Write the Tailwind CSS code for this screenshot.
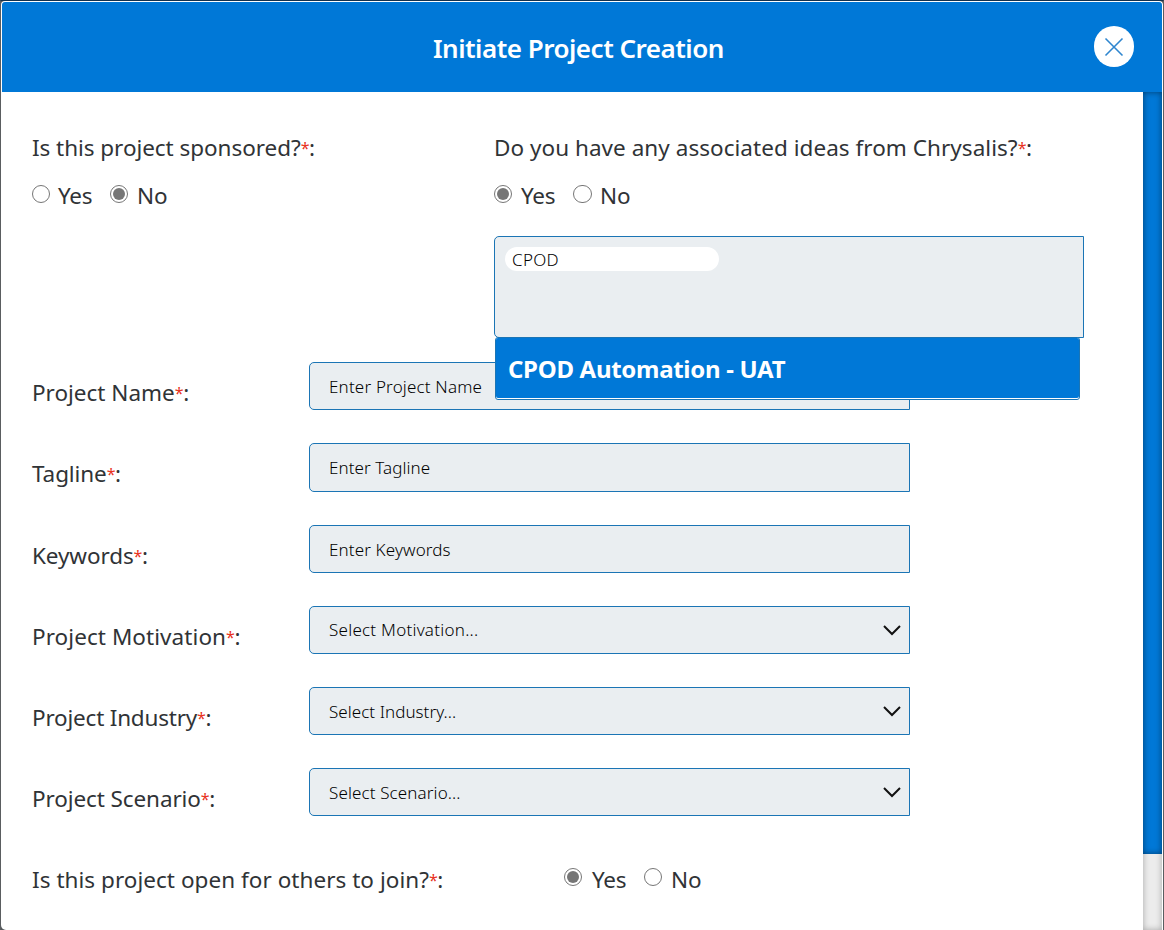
<!DOCTYPE html>
<html lang="en">
<head>
<meta charset="utf-8">
<title>Initiate Project Creation</title>
<script src="https://cdn.jsdelivr.net/npm/@tailwindcss/browser@4"></script>
</head>
<body class="bg-[#55585b] font-['Noto_Sans','Open_Sans',sans-serif] text-[#303336]">
<main class="flex h-[930px] w-[1164px] flex-col overflow-hidden border-t border-r border-l border-t-[#14324f] border-r-[#5a5d60] border-l-[#5a5d60]">
  <header class="flex h-[91px] shrink-0 items-center rounded-t-[4px] border-t border-r border-l border-white bg-[#0078d7]">
    <h1 class="mt-[2px] ml-[431px] w-[292px] text-[26px] leading-[34px] font-semibold tracking-[-0.5px] whitespace-nowrap text-white">Initiate Project Creation</h1>
    <button class="-mt-[2px] ml-[369px] flex h-[41px] w-[40px] items-center justify-center rounded-full bg-white" aria-label="Close">
      <svg class="mt-[1px] h-[20px] w-[20px]" viewBox="0 0 20 20" fill="none" stroke="#2f86cf" stroke-width="1.6"><path d="M1.500 1.500l17 17M18.500 1.500l-17 17"/></svg>
    </button>
  </header>
  <div class="flex h-[838px] rounded-bl-[5px] border-r border-white bg-white">
    <form class="w-[1142px] pt-[39px] pl-[31px]">
      <div class="flex h-[231px]">
        <section class="w-[462px]">
          <p class="h-[33px] text-[22.500px] leading-[33px] whitespace-nowrap"><span class="tracking-[-0.05px]">Is this project sponsored?</span><span class="align-[2px] text-[16px] leading-none tracking-[-0.5px] text-[#e8321c]">*</span>:</p>
          <div class="mt-[15px] flex h-[33px] text-[22.500px] leading-[33px]">
            <label class="flex w-[78px] tracking-[-0.3px]"><span class="mt-[6px] mr-[8px] h-[18px] w-[18px] rounded-full border border-[#767676] bg-white"></span>Yes</label>
            <label class="flex"><span class="mt-[6px] mr-[9px] flex h-[18px] w-[18px] items-center justify-center rounded-full border border-[#767676] bg-white"><i class="h-[12px] w-[12px] rounded-full bg-[#767676]"></i></span>No</label>
          </div>
        </section>
        <section>
          <p class="h-[33px] text-[22.500px] leading-[33px] whitespace-nowrap"><span class="tracking-[0.04px]">Do you have any associated ideas from Chrysalis?</span><span class="align-[2px] text-[16px] leading-none tracking-[-0.5px] text-[#e8321c]">*</span>:</p>
          <div class="mt-[15px] flex h-[33px] text-[22.500px] leading-[33px]">
            <label class="flex w-[79px] tracking-[-0.3px]"><span class="mt-[6px] mr-[9px] flex h-[18px] w-[18px] items-center justify-center rounded-full border border-[#767676] bg-white"><i class="h-[12px] w-[12px] rounded-full bg-[#767676]"></i></span>Yes</label>
            <label class="flex"><span class="mt-[6px] mr-[8px] h-[18px] w-[19px] rounded-full border border-[#767676] bg-white"></span>No</label>
          </div>
          <div class="relative mt-[24px] h-[102px] w-[590px] rounded-l-[5px] border border-[#1b75b5] bg-[#eaeef1] pt-[10px] pl-[10px]">
            <div class="h-[24px] w-[214px] rounded-full bg-white pl-[7px] text-[17px] leading-[25px] font-light text-black"><span class="tracking-[0.3px]">CPOD</span></div>
            <div class="absolute top-[100px] left-0 z-10 h-[63px] w-[585px] rounded-[3px] border border-[#1b75b5] bg-white">
              <div class="h-[60px] rounded-[2px] bg-[#0078d7] pl-[12px] text-[24px] leading-[62px] font-bold tracking-[-0.3px] whitespace-nowrap text-white">CPOD Automation - UAT</div>
            </div>
          </div>
        </section>
      </div>

      <div class="flex h-[81.250px]">
        <label class="w-[277px] pt-[14px] text-[22.500px] leading-[33px] whitespace-nowrap"><span class="tracking-[0px]">Project Name</span><span class="align-[2px] text-[16px] leading-none tracking-[-0.5px] text-[#e8321c]">*</span>:</label>
        <div class="h-[48px] w-[601px] rounded-l-[5px] border border-[#1b75b5] bg-[#eaeef1] pl-[19px] text-[17px] leading-[48px] font-light text-black"><span class="tracking-[0.18px]">Enter Project Name</span></div>
      </div>
      <div class="flex h-[81.250px]">
        <label class="w-[277px] pt-[14px] text-[22.500px] leading-[33px] whitespace-nowrap"><span class="tracking-[-0.1px]">Tagline</span><span class="align-[2px] text-[16px] leading-none tracking-[-0.5px] text-[#e8321c]">*</span>:</label>
        <div class="h-[48.500px] w-[601px] rounded-l-[5px] border border-[#1b75b5] bg-[#eaeef1] pl-[19px] text-[17px] leading-[48px] font-light text-black"><span class="tracking-[0.07px]">Enter Tagline</span></div>
      </div>
      <div class="flex h-[81.250px]">
        <label class="w-[277px] pt-[14px] text-[22.500px] leading-[33px] whitespace-nowrap"><span class="tracking-[-0.1px]">Keywords</span><span class="align-[2px] text-[16px] leading-none tracking-[-0.5px] text-[#e8321c]">*</span>:</label>
        <div class="h-[48px] w-[601px] rounded-l-[5px] border border-[#1b75b5] bg-[#eaeef1] pl-[19px] text-[17px] leading-[48px] font-light text-black"><span class="tracking-[0.13px]">Enter Keywords</span></div>
      </div>
      <div class="flex h-[81.250px]">
        <label class="w-[277px] pt-[14px] text-[22.500px] leading-[33px] whitespace-nowrap"><span class="tracking-[0.07px]">Project Motivation</span><span class="align-[2px] text-[16px] leading-none tracking-[-0.5px] text-[#e8321c]">*</span>:</label>
        <div class="flex h-[48px] w-[601px] items-center justify-between rounded-l-[5px] border border-[#1b75b5] bg-[#eaeef1] pr-[8px] pl-[19px] text-[17px] leading-[46px] font-light text-black"><span class="mt-px tracking-[0.25px]">Select Motivation...</span><svg class="h-[12px] w-[18px]" viewBox="0 0 18 12" fill="none" stroke="#111" stroke-width="2"><path d="M1 2l8 8 8-8"/></svg></div>
      </div>
      <div class="flex h-[81.250px]">
        <label class="w-[277px] pt-[14px] text-[22.500px] leading-[33px] whitespace-nowrap"><span class="tracking-[-0.2px]">Project Industry</span><span class="align-[2px] text-[16px] leading-none tracking-[-0.5px] text-[#e8321c]">*</span>:</label>
        <div class="flex h-[48px] w-[601px] items-center justify-between rounded-l-[5px] border border-[#1b75b5] bg-[#eaeef1] pr-[8px] pl-[19px] text-[17px] leading-[46px] font-light text-black"><span class="mt-px tracking-[0.05px]">Select Industry...</span><svg class="h-[12px] w-[18px]" viewBox="0 0 18 12" fill="none" stroke="#111" stroke-width="2"><path d="M1 2l8 8 8-8"/></svg></div>
      </div>
      <div class="flex h-[81.250px]">
        <label class="w-[277px] pt-[14px] text-[22.500px] leading-[33px] whitespace-nowrap"><span class="tracking-[-0.1px]">Project Scenario</span><span class="align-[2px] text-[16px] leading-none tracking-[-0.5px] text-[#e8321c]">*</span>:</label>
        <div class="flex h-[48px] w-[601px] items-center justify-between rounded-l-[5px] border border-[#1b75b5] bg-[#eaeef1] pr-[8px] pl-[19px] text-[17px] leading-[46px] font-light text-black"><span class="mt-px tracking-[0.12px]">Select Scenario...</span><svg class="h-[12px] w-[18px]" viewBox="0 0 18 12" fill="none" stroke="#111" stroke-width="2"><path d="M1 2l8 8 8-8"/></svg></div>
      </div>
      <div class="flex pt-[13px] text-[22.500px] leading-[33px]">
        <p class="w-[532px] whitespace-nowrap"><span class="tracking-[0.04px]">Is this project open for others to join?</span><span class="align-[2px] text-[16px] leading-none tracking-[-0.5px] text-[#e8321c]">*</span>:</p>
        <label class="flex w-[80px] tracking-[-0.3px]"><span class="mt-[5px] mr-[10px] flex h-[18px] w-[18px] items-center justify-center rounded-full border border-[#767676] bg-white"><i class="h-[12px] w-[12px] rounded-full bg-[#767676]"></i></span>Yes</label>
        <label class="flex"><span class="mt-[5px] mr-[9px] h-[18px] w-[18px] rounded-full border border-[#767676] bg-white"></span>No</label>
      </div>
    </form>
    <div class="w-[19px] bg-[#ececec] shadow-[inset_0_0_6px_rgba(0,0,0,0.3)]">
      <div class="h-[762px] bg-[#0078d7] shadow-[inset_0_0_6px_rgba(0,0,0,0.5)]"></div>
    </div>
  </div>
</main>
</body>
</html>
